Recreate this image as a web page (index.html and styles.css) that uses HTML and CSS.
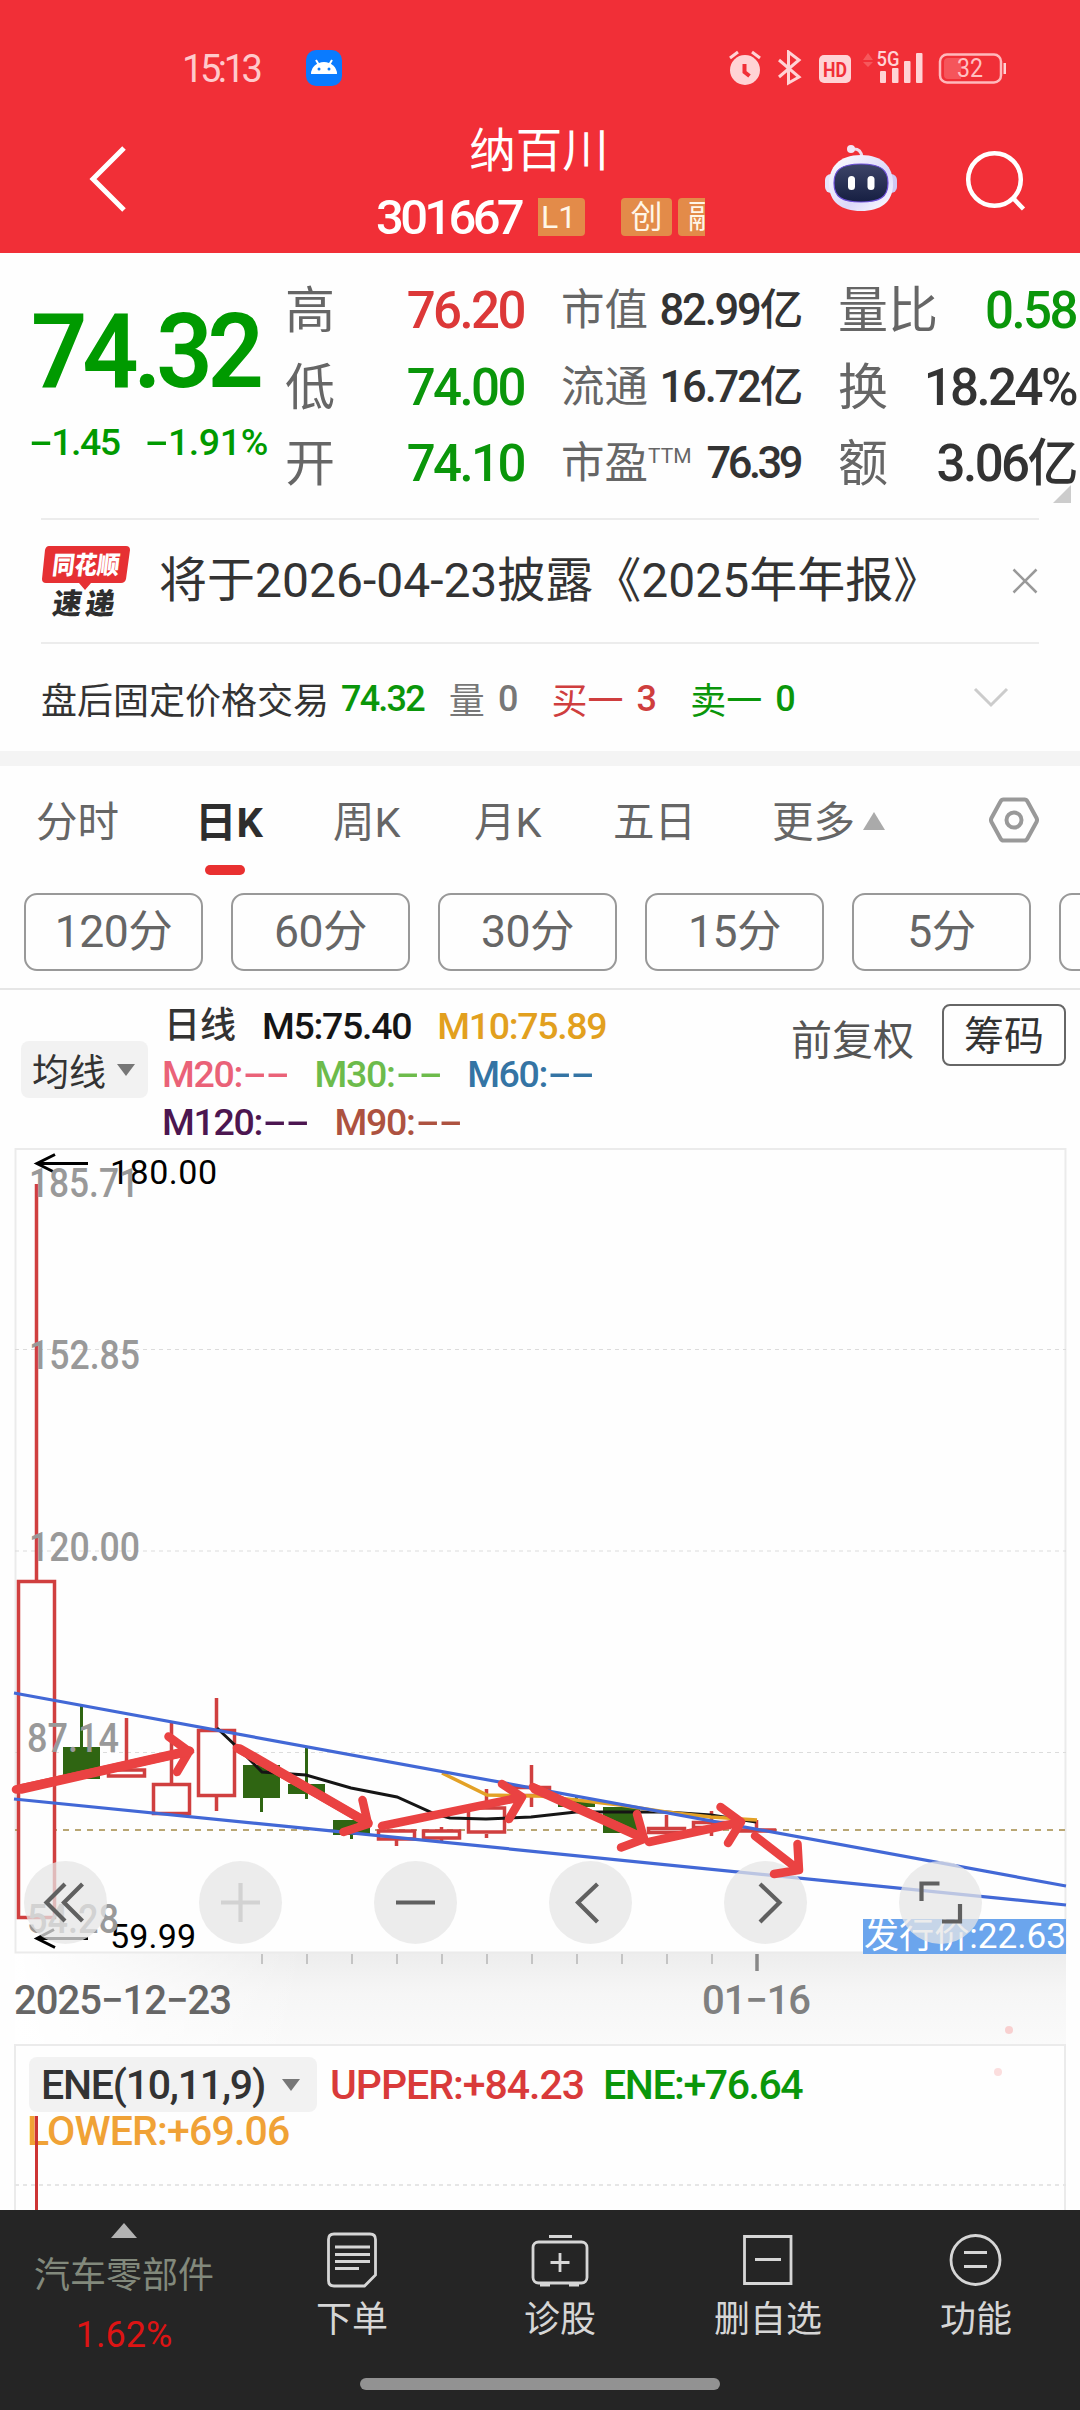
FILE: index.html
```html
<!DOCTYPE html>
<html lang="zh-CN">
<head>
    <meta charset="UTF-8">
    <title>纳百川 301667</title>
    <link rel="stylesheet" href="styles.css">
</head>
<body>
    <header class="header">
        <div class="status">
            <span class="clock num">15:13</span>
            <svg class="android" width="36" height="36" viewBox="0 0 36 36">
                <rect width="36" height="36" rx="10" fill="#0a7bff"/>
                <path d="M5 24a13 12 0 0 1 26 0z" fill="#fff"/>
                <path d="M10 10l3 5M26 10l-3 5" stroke="#fff" stroke-width="2"/>
                <circle cx="13" cy="19" r="1.5" fill="#0a7bff"/>
                <circle cx="23" cy="19" r="1.5" fill="#0a7bff"/>
            </svg>
            <svg class="status-icons" width="280" height="36" viewBox="728 50 280 36">
                <g fill="#ffd3d5">
                    <circle cx="745" cy="70" r="15"/>
                    <rect x="819" y="55" width="32" height="28" rx="5"/>
                    <rect x="880" y="71" width="6" height="12" rx="1"/>
                    <rect x="892" y="68" width="6.500" height="15" rx="1"/>
                    <rect x="904" y="61" width="6.500" height="22" rx="1"/>
                    <rect x="916" y="53" width="6.500" height="30" rx="1"/>
                    <rect x="1003.500" y="63" width="2.500" height="11"/>
                </g>
                <path d="M730 58l8-6M752 52l8 6" stroke="#ffd3d5" stroke-width="3"/>
                <path d="M744.500 64v8l5 4" fill="none" stroke="#f12f37" stroke-width="4"/>
                <path d="M779 60l20 17-10.500 6V52l10.500 8-20 17" fill="none" stroke="#ffd3d5" stroke-width="3"/>
                <path d="M863 60l5-7 5 7zM863 62l5 5 5-5z" fill="#f6585c"/>
                <rect x="940" y="54.500" width="61" height="28" rx="7" fill="none" stroke="#ffb9bc" stroke-width="2.500"/>
                <path d="M948 58h13v21h-13q-4 0-4-4V62q0-4 4-4z" fill="#f5555b"/>
                <text x="823" y="76.500" font-size="21" font-weight="700" textLength="24" lengthAdjust="spacingAndGlyphs" fill="#f12f37">HD</text>
                <text x="876.500" y="66" font-size="20" font-weight="500" textLength="23" lengthAdjust="spacingAndGlyphs" fill="#ffd3d5">5G</text>
                <text x="957" y="77" font-size="25" textLength="26" lengthAdjust="spacingAndGlyphs" fill="#ffc0c2">32</text>
            </svg>
        </div>
        <div class="titlebar">
            <svg class="back" width="40" height="70" viewBox="0 0 40 70">
                <path d="M36 4L5 35l31 31" fill="none" stroke="#fff" stroke-width="5"/>
            </svg>
            <div class="title">
                <h1>纳百川</h1>
                <div class="code-row">
                    <span class="code num">301667</span>
                    <span class="badge l1">L1</span>
                    <span class="badge gem">创</span>
                    <span class="badge margin">融</span>
                </div>
            </div>
            <svg class="robot" width="76" height="70" viewBox="824 143 76 70">
                <defs>
                    <linearGradient id="shell" x1="0" y1="0" x2="1" y2="1">
                        <stop offset="0" stop-color="#fff"/>
                        <stop offset=".6" stop-color="#dcd8fa"/>
                        <stop offset="1" stop-color="#fff"/>
                    </linearGradient>
                    <linearGradient id="visor" x1="0" y1="0" x2="0" y2="1">
                        <stop offset="0" stop-color="#3d4468"/>
                        <stop offset="1" stop-color="#161f42"/>
                    </linearGradient>
                </defs>
                <path d="M852 149q9-1 10 8" fill="none" stroke="#f0dcec" stroke-width="3"/>
                <circle cx="851" cy="149" r="4" fill="#f3e6f5"/>
                <rect x="825" y="174" width="12" height="19" rx="6" fill="#e8e4fa"/>
                <rect x="885" y="174" width="12" height="19" rx="6" fill="#cfc8f2"/>
                <path d="M861 155c22 0 32 12 32 29 0 18-12 27-32 27s-32-9-32-27c0-17 10-29 32-29z" fill="url(#shell)"/>
                <path d="M861 164c20 0 27 6 27 19 0 14-8 19-27 19s-27-5-27-19c0-13 7-19 27-19z" fill="url(#visor)" stroke="#6d4fd8" stroke-width="1.200"/>
                <rect x="848" y="176" width="7" height="14" rx="3.500" fill="#fff"/>
                <rect x="867.500" y="176" width="7" height="14" rx="3.500" fill="#fff"/>
            </svg>
            <svg class="search" width="62" height="62" viewBox="965 150 62 62">
                <circle cx="994.500" cy="179.500" r="26.300" fill="none" stroke="#fff" stroke-width="4.500"/>
                <path d="M1012 197l11.500 12" stroke="#fff" stroke-width="4.500"/>
            </svg>
        </div>
    </header>

    <section class="quote">
        <div class="price-box">
            <div class="price num">74.32</div>
            <div class="change num"><span><i class="dash">-</i>1.45</span><span class="pct"><i class="dash">-</i>1.91%</span></div>
        </div>
        <div class="stats">
            <div class="cell"><span class="lab">高</span><b class="num red">76.20</b></div>
            <div class="cell small"><span class="lab">市值</span><b class="num">82.99亿</b></div>
            <div class="cell"><span class="lab">量比</span><b class="num green">0.58</b></div>
            <div class="cell"><span class="lab">低</span><b class="num green">74.00</b></div>
            <div class="cell small"><span class="lab">流通</span><b class="num">16.72亿</b></div>
            <div class="cell"><span class="lab">换</span><b class="num">18.24%</b></div>
            <div class="cell"><span class="lab">开</span><b class="num green">74.10</b></div>
            <div class="cell small"><span class="lab">市盈<sup>TTM</sup></span><b class="num pe">76.39</b></div>
            <div class="cell"><span class="lab">额</span><b class="num">3.06亿</b></div>
        </div>
        <div class="corner"></div>
    </section>

    <section class="notice">
        <svg width="90" height="74" viewBox="41 543 90 74">
            <path d="M49 544h77q4 0 4 4l-4 29q-1 4-5 4h-30l-6 7-6-7H46q-4 0-4-4l3-29q1-4 4-4z" fill="#e63033"/>
            <text x="0" y="0" transform="translate(51.500 572) skewX(-7)" font-size="25" font-weight="900" textLength="67" lengthAdjust="spacingAndGlyphs" fill="#fff">同花顺</text>
            <text x="0" y="0" transform="translate(51.500 612) skewX(-8)" font-size="29" font-weight="900" textLength="62" fill="#2e2e2e">速递</text>
        </svg>
        <p>将于2026-04-23披露《2025年年报》</p>
        <svg class="close" width="26" height="26" viewBox="0 0 26 26">
            <path d="M1.500 1.500l23 23M24.500 1.500l-23 23" stroke="#999" stroke-width="2.500"/>
        </svg>
    </section>

    <section class="after-hours">
        <span class="ah-title">盘后固定价格交易</span>
        <b class="num green">74.32</b>
        <span class="ah-vol">量</span><b class="num gray">0</b>
        <span class="ah-buy red2">买一</span><b class="num red2">3</b>
        <span class="ah-sell green">卖一</span><b class="num green">0</b>
        <svg class="more" width="36" height="22" viewBox="0 0 36 22">
            <path d="M2 2l16 16L34 2" fill="none" stroke="#ccc" stroke-width="3"/>
        </svg>
    </section>

    <nav class="tabs">
        <span class="t1">分时</span>
        <span class="t2 active">日K</span>
        <span class="t3">周K</span>
        <span class="t4">月K</span>
        <span class="t5">五日</span>
        <span class="t6">更多<i class="tri-up"></i></span>
        <svg class="gear" width="50" height="46" viewBox="0 0 50 46">
            <path d="M14.500 2.500h21q2 0 3 2l9 16.500q1 2 0 4l-9 16.500q-1 2-3 2h-21q-2 0-3-2l-9-16.500q-1-2 0-4l9-16.500q1-2 3-2z" fill="none" stroke="#999" stroke-width="4"/>
            <circle cx="25" cy="23" r="7.500" fill="none" stroke="#999" stroke-width="4"/>
        </svg>
    </nav>
    <div class="periods">
        <button>120分</button>
        <button>60分</button>
        <button>30分</button>
        <button>15分</button>
        <button>5分</button>
        <button></button>
    </div>

    <section class="ma">
        <span class="picker">均线<i class="tri-down"></i></span>
        <div class="ma-rows num">
            <div><span class="ma-name">日线</span><span class="c-black">M5:75.40</span><span class="c-orange">M10:75.89</span></div>
            <div><span class="c-pink">M20:<i class="dash">-</i><i class="dash">-</i></span><span class="c-green">M30:<i class="dash">-</i><i class="dash">-</i></span><span class="c-blue">M60:<i class="dash">-</i><i class="dash">-</i></span></div>
            <div><span class="c-purple">M120:<i class="dash">-</i><i class="dash">-</i></span><span class="c-brown">M90:<i class="dash">-</i><i class="dash">-</i></span></div>
        </div>
        <span class="adjust">前复权</span>
        <span class="chips">筹码</span>
    </section>

    <!-- K线主图 -->
    <svg class="kline" width="1080" height="896" viewBox="0 1148 1080 896">
        <defs>
            <linearGradient id="axisV" x1="0" y1="0" x2="0" y2="1">
                <stop offset="0" stop-color="#ededed"/>
                <stop offset=".45" stop-color="#f6f6f6"/>
                <stop offset="1" stop-color="#fafafa"/>
            </linearGradient>
            <linearGradient id="axisH" x1="0" y1="0" x2="1" y2="0">
                <stop offset="0" stop-color="#fff"/>
                <stop offset="1" stop-color="#fff" stop-opacity="0"/>
            </linearGradient>
        </defs>
        <rect x="15" y="1953" width="1051" height="91" fill="url(#axisV)"/>
        <rect x="15" y="1953" width="290" height="91" fill="url(#axisH)"/>
        <rect x="15.500" y="1149" width="1050" height="803.500" fill="#fefefe" stroke="#ebebeb" stroke-width="2"/>
        <g stroke="#dcdcdc" stroke-width="1.200" stroke-dasharray="4 4">
            <path d="M15 1349.500h1051M15 1551h1051M15 1752.500h1051"/>
        </g>
        <path d="M15 1830h1051" stroke="#b9a673" stroke-width="2" stroke-dasharray="6 6"/>

        <g stroke="#c4c4c4" stroke-width="2">
            <path d="M262 1954v10M307 1954v10M352 1954v10M397 1954v10M442 1954v10M487 1954v10M532 1954v10M577 1954v10M622 1954v10M667 1954v10M712 1954v10"/>
            <path d="M757 1954v17" stroke="#888" stroke-width="3.500"/>
        </g>

        <g fill="#fefefe" stroke="#d03f3f" stroke-width="3.500">
            <path d="M36.500 1184v396"/>
            <rect x="18.500" y="1581.500" width="36" height="336"/>
            <path d="M126.500 1718v51M171.500 1723v60M216.500 1698v31M216.500 1797v14M396.500 1840v6M441.500 1827v14M486.500 1789v19M486.500 1834v4M531.500 1765v42M666.500 1815v12M711.500 1811v25M756.500 1820v9"/>
            <rect x="108.500" y="1770" width="36" height="6"/>
            <rect x="153.500" y="1784.500" width="36" height="29"/>
            <rect x="198.500" y="1730.500" width="36" height="65"/>
            <rect x="378.500" y="1831" width="36" height="8"/>
            <rect x="423.500" y="1831" width="36" height="7"/>
            <rect x="468.500" y="1808" width="36" height="24"/>
            <rect x="513.500" y="1787.500" width="36" height="8"/>
            <rect x="648.500" y="1828.500" width="36" height="4"/>
            <rect x="693.500" y="1822.500" width="36" height="5"/>
            <rect x="738.500" y="1830" width="36" height="1"/>
        </g>
        <g fill="#2f6512" stroke="#2f6512" stroke-width="3">
            <path d="M81.500 1706v41M261.500 1798v14M306.500 1748v51M351.500 1835v4M576.500 1797v6"/>
            <g stroke="none">
                <rect x="63" y="1747" width="37" height="32"/>
                <rect x="243" y="1765" width="37" height="33"/>
                <rect x="288" y="1784" width="37" height="10"/>
                <rect x="333" y="1820" width="37" height="15"/>
                <rect x="558" y="1801" width="37" height="6"/>
                <rect x="603" y="1807" width="37" height="26"/>
            </g>
        </g>

        <g fill="none" stroke-width="3">
            <path d="M217 1728l20 19 25 25 44 3 45 13 46 9 38 17 15 4 36 1 45-2 45-5h90l45 3 45 7" stroke="#151515"/>
            <path d="M442 1773l45 22 53 1 36 4 44 5 46 7 45 5 46 3" stroke="#e3a126" stroke-width="3.500"/>
            <path d="M14 1693l1052 193M14 1799l1052 106" stroke="#4268d6" stroke-width="3.200"/>
        </g>

        <text class="edge" x="110" y="1184" textLength="107">180.00</text>
        <text class="edge" x="110" y="1948" textLength="86">59.99</text>
        <path d="M88 1163.500H38M55 1154.500l-18 9 16 8M88 1938.500H38M54 1929.500l-17 9 18 9" fill="none" stroke="#000" stroke-width="3"/>
        <g class="scale">
            <text x="29" y="1197" textLength="110" lengthAdjust="spacingAndGlyphs">185.71</text>
            <text x="29" y="1369" textLength="111" lengthAdjust="spacingAndGlyphs">152.85</text>
            <text x="29" y="1561" textLength="111" lengthAdjust="spacingAndGlyphs">120.00</text>
            <text x="27" y="1752" textLength="92" lengthAdjust="spacingAndGlyphs">87.14</text>
            <text x="27" y="1933" textLength="92" lengthAdjust="spacingAndGlyphs">54.28</text>
        </g>
        <rect x="863" y="1919" width="203" height="35" fill="#6ba5ed"/>
        <text x="864" y="1948" font-size="35" textLength="202" lengthAdjust="spacingAndGlyphs" fill="#fff">发行价:22.63</text>

        <g fill="#e6e6e6" fill-opacity=".74">
            <circle cx="65.500" cy="1902.500" r="41.500"/>
            <circle cx="240.500" cy="1902.500" r="41.500"/>
            <circle cx="415.500" cy="1902.500" r="41.500"/>
            <circle cx="590.500" cy="1902.500" r="41.500"/>
            <circle cx="765.500" cy="1902.500" r="41.500"/>
            <circle cx="940.500" cy="1902.500" r="41.500"/>
        </g>
        <g fill="none" stroke="#606060" stroke-width="4.200">
            <path d="M65 1884l-18.500 18.500L65 1921M82.500 1884L64 1902.500l18.500 18.500"/>
            <path d="M221 1902.500h39M240.500 1883v39" stroke="#d2d2d2"/>
            <path d="M396 1902.500h39"/>
            <path d="M597.500 1884L578 1902.500l19.500 19.500"/>
            <path d="M760 1884l19.500 18.500-19.500 19.500"/>
            <path d="M921.500 1901v-17.500h18M942 1921.500h18V1904"/>
        </g>
        <!-- 手绘趋势箭头 -->
        <g fill="none" stroke="#ea4242" stroke-width="8.500" stroke-linecap="round" stroke-linejoin="round">
            <path d="M16 1789.500l174-38.500M168.500 1736.500l20.500 15-12 20.500"/>
            <path d="M237 1748l131 75M362.500 1800l5.500 24-24.500 8"/>
            <path d="M382 1826l140-29M502 1784l20 13-13 22"/>
            <path d="M533 1787l110 51M637 1814l7 25-23 8.500"/>
            <path d="M649 1842l92-20M720.500 1807l20.500 15-13 21"/>
            <path d="M755 1836l44 34M797.500 1844l1.500 26-25 4"/>
            <path d="M21 1789l168-38M240 1749l128 74M535 1789l108 49" stroke-width="9.500"/>
        </g>

        <text class="date" x="14" y="2014" textLength="218" fill="#666">2025−12−23</text>
        <text class="date" x="702" y="2014" textLength="109" fill="#808080">01−16</text>
        <circle cx="1009" cy="2030" r="4" fill="#f8d0d0"/>
    </svg>

    <section class="indicator">
        <div class="ene num">
            <span class="picker">ENE(10,11,9)<i class="tri-down"></i></span>
            <span class="upper">UPPER:+84.23</span>
            <span class="mid">ENE:+76.64</span>
        </div>
        <div class="lower num">LOWER:+69.06</div>
        <svg class="ene-lines" width="1051" height="166" viewBox="15 2044 1051 166">
            <path d="M15 2185h1051" stroke="#e6e6e6" stroke-width="2" stroke-dasharray="4 4"/>
            <path d="M36.500 2116v94" stroke="#cd3434" stroke-width="3"/>
            <circle cx="998" cy="2072" r="4" fill="#fbdede"/>
        </svg>
    </section>

    <footer class="bottom">
        <div class="sector">
            <i class="tri-up"></i>
            <span>汽车零部件</span>
            <b>1.62%</b>
        </div>
        <div class="item">
            <svg width="60" height="60" viewBox="0 0 60 60">
                <path d="M12 5q-5.500 0-5.500 5.500v41q0 5.500 5.500 5.500h30.500l11-11V10.500q0-5.500-5.500-5.500z"/>
                <path d="M13 18h35M13 25.500h35M13 32.500h35M13 39.500h24"/>
            </svg>
            下单
        </div>
        <div class="item">
            <svg width="60" height="60" viewBox="0 0 60 60">
                <rect x="3" y="13" width="54" height="41" rx="5.500"/>
                <path d="M19 7.500h23M20.500 33.500h19M30 24v19M10 56h10M39 56h10"/>
            </svg>
            诊股
        </div>
        <div class="item">
            <svg width="60" height="60" viewBox="0 0 60 60">
                <path d="M6.500 7.500h46.500v47H6.500zM17 30.500h26"/>
            </svg>
            删自选
        </div>
        <div class="item">
            <svg width="60" height="60" viewBox="0 0 60 60">
                <circle cx="29.500" cy="31" r="24.500"/>
                <path d="M18 23.500h23M18 37.500h23"/>
            </svg>
            功能
        </div>
        <div class="home-bar"></div>
    </footer>
</body>
</html>
```
FILE: styles.css
```css
* {
    box-sizing: border-box;
}
body {
    margin: 0;
    width: 1080px;
    height: 2410px;
    overflow: hidden;
    background: #fefefe;
    color: #333;
    font-family: Roboto, "Noto Sans CJK SC", sans-serif;
}
svg {
    display: block;
    flex: none;
}
i {
    font-style: normal;
}
.num {
    font-weight: 500;
    letter-spacing: -0.05em;
}
.dash {
    display: inline-block;
    width: 0.62em;
    text-align: center;
    transform: scaleX(1.9);
}
.red { color: #dc3838; }
.red2 { color: #cf3e3e; }
.green { color: #0a960a; }
.gray { color: #777; }
.tri-up, .tri-down {
    display: inline-block;
    border: 11px solid transparent;
    border-top-width: 0;
    border-bottom: 18px solid #aaa;
}
.tri-down {
    border: 9px solid transparent;
    border-bottom-width: 0;
    border-top: 12px solid #777;
}

/* 顶部 */
.header {
    height: 253px;
    background: #f12f37;
    color: #fff;
}
.status {
    display: flex;
    padding: 50px 72px 0 182px;
    height: 122px;
}
.clock {
    width: 124px;
    font-size: 38px;
    font-weight: 400;
    line-height: 38px;
    letter-spacing: -0.09em;
    color: #ffc9cb;
}
.status-icons {
    margin-left: auto;
}
.titlebar {
    display: flex;
}
.back {
    margin: 22px 0 0 88px;
}
.title {
    width: 330px;
    margin-left: 248px;
}
h1 {
    margin: 0;
    padding-right: 4px;
    font-size: 46.5px;
    font-weight: 400;
    line-height: 59px;
    text-align: center;
}
.code-row {
    display: flex;
    align-items: center;
    height: 72px;
}
.code {
    width: 162px;
    font-size: 49px;
    letter-spacing: -0.075em;
}
.badge {
    height: 38px;
    border-radius: 4px;
    background: #e38b49;
    color: #fff6e8;
    font-size: 32px;
    line-height: 38px;
    text-align: center;
    overflow: hidden;
}
.badge.l1 {
    width: 47px;
    text-align: left;
    padding-left: 3px;
    border-radius: 0 4px 4px 0;
}
.badge.gem {
    width: 51px;
    margin-left: 36px;
}
.badge.margin {
    width: 27px;
    margin-left: 6px;
    padding-left: 10px;
    border-radius: 4px 0 0 4px;
    text-align: left;
}
.robot {
    margin: 21px 0 0 118px;
}
.search {
    margin: 28px 0 0 65px;
}

/* 行情 */
.quote {
    display: flex;
    position: relative;
    height: 265px;
    padding: 20px 2px 0 31px;
}
.price-box {
    width: 254px;
    color: #009a00;
}
.price {
    margin-top: 17px;
    font-size: 103px;
    line-height: 123px;
    letter-spacing: -0.053em;
    font-weight: 600;
    transform: scaleX(0.96);
    transform-origin: 0 0;
}
.change {
    display: flex;
    justify-content: space-between;
    width: 237px;
    margin-top: 8px;
    font-size: 37.5px;
    line-height: 42px;
    letter-spacing: -0.04em;
    white-space: nowrap;
}
.change .dash {
    margin-left: -3px;
}
.change .pct {
    letter-spacing: -0.01em;
}
.stats {
    display: grid;
    grid-template-columns: 239px 240px 238px;
    grid-auto-rows: 76.5px;
    column-gap: 37px;
    width: 791px;
    color: #333;
}
.cell {
    display: flex;
    justify-content: space-between;
    align-items: center;
    font-size: 50px;
    line-height: 76px;
    white-space: nowrap;
}
.cell b {
    font-size: 51px;
}
.cell .lab {
    color: #666;
}
.cell.small {
    font-size: 43.5px;
}
.cell.small b {
    font-size: 43.5px;
}
.cell.small .pe {
    letter-spacing: -0.08em;
    padding-right: 1px;
}
sup {
    font-size: 21px;
    line-height: 0;
    vertical-align: 15px;
}
.corner {
    position: absolute;
    right: 9px;
    bottom: 15px;
    border-left: 18px solid transparent;
    border-bottom: 18px solid #ccc;
}

/* 公告 */
.notice {
    display: flex;
    height: 124px;
    margin: 0 41px;
    padding-top: 25px;
    border-top: 2px solid #ececec;
}
.notice p {
    flex: 1;
    margin: 2px 0 0 28px;
    font-size: 48px;
    line-height: 68px;
    white-space: nowrap;
}
.close {
    margin: 23px 1px 0 0;
}
.after-hours {
    display: flex;
    align-items: center;
    height: 109px;
    margin: 0 41px;
    padding-top: 1px;
    border-top: 2px solid #ececec;
    font-size: 36px;
}
.after-hours b {
    padding-top: 1px;
    font-size: 36px;
}
.ah-title {
    width: 300px;
    font-size: 36px;
}
.ah-vol {
    margin: 0 13px 0 25px;
    color: #777;
}
.ah-buy {
    margin: 0 13px 0 35px;
}
.ah-sell {
    margin: 0 13px 0 35px;
}
.more {
    margin: 0 30px 0 auto;
}

/* 周期 */
.tabs {
    display: flex;
    height: 142px;
    padding: 27px 41px 0 36px;
    border-top: 15px solid #f4f4f4;
    font-size: 41.5px;
    line-height: 60px;
    color: #666;
}
.t1 { width: 159px; }
.t2 { width: 138px; }
.t3 { width: 141px; }
.t4 { width: 139px; }
.t5 { width: 159px; }
.t6 { width: 217px; white-space: nowrap; }
.t6 .tri-up {
    margin-left: 8px;
    vertical-align: 7px;
}
.active {
    position: relative;
    font-weight: 700;
    color: #2e2e2e;
}
.active::after {
    content: "";
    position: absolute;
    left: 10px;
    top: 72px;
    width: 40px;
    height: 10px;
    border-radius: 5px;
    background: #e93030;
}
.gear {
    margin-top: 4px;
}
.periods {
    display: flex;
    gap: 28px;
    height: 97px;
    padding-left: 24px;
    overflow: hidden;
    border-bottom: 2px solid #e6e6e6;
}
.periods button {
    flex: none;
    width: 179px;
    height: 78px;
    padding: 0;
    border: 2px solid #999;
    border-radius: 13px;
    background: none;
    color: #666;
    font: 44.5px/74px Roboto, "Noto Sans CJK SC", sans-serif;
    letter-spacing: -0.01em;
}

/* 均线 */
.ma {
    display: flex;
    height: 158px;
    padding: 12px 14px 0 21px;
}
.picker {
    display: flex;
    align-items: center;
    border-radius: 8px;
    background: #f2f2f2;
    color: #333;
}
.ma .picker {
    width: 127px;
    height: 57px;
    margin-top: 39px;
    padding-left: 11px;
    font-size: 37px;
}
.ma .tri-down {
    margin-left: 11px;
}
.ma-rows {
    width: 627px;
    margin-left: 14px;
    font-size: 37.5px;
    line-height: 48px;
    letter-spacing: -0.035em;
}
.ma-rows > div {
    display: flex;
    gap: 26px;
}
.ma-name {
    letter-spacing: 0;
    font-size: 36px;
    margin-left: 2px;
}
.c-black { color: #151515; }
.c-orange { color: #e2a01e; }
.c-pink { color: #ea6278; }
.c-green { color: #6dbb4b; }
.c-blue { color: #3474a4; }
.c-purple { color: #4c1650; }
.c-brown { color: #ad5240; }
.adjust {
    width: 151px;
    margin: 11px 0 0 2px;
    font-size: 41px;
    line-height: 56px;
    color: #555;
}
.chips {
    width: 124px;
    height: 62px;
    margin-top: 2px;
    border: 2px solid #666;
    border-radius: 8px;
    font-size: 40px;
    line-height: 62px;
    text-align: center;
}

/* 图表 */
.kline .edge {
    font-size: 34px;
    fill: #000;
}
.kline .scale text {
    font-size: 40px;
    font-weight: 500;
    fill: #999;
}
.kline .date {
    font-size: 40px;
    font-weight: 500;
}
.indicator {
    position: relative;
    height: 166px;
    margin: 0 14px 0 14px;
    padding: 11px 0 0 13px;
    border: 2px solid #ebebeb;
    border-bottom: none;
}
.ene {
    display: flex;
    align-items: center;
    height: 55px;
    font-size: 41px;
    letter-spacing: -0.025em;
}
.ene .picker {
    width: 288px;
    height: 55px;
    padding-left: 12px;
    white-space: nowrap;
    letter-spacing: -0.03em;
}
.ene .tri-down {
    margin-left: auto;
    margin-right: 17px;
}
.upper {
    margin-left: 13px;
    width: 273px;
    color: #d93a3a;
}
.mid {
    letter-spacing: -0.035em;
    color: #0a960a;
}
.lower {
    margin-left: -2px;
    font-size: 41px;
    line-height: 39px;
    letter-spacing: -0.02em;
    color: #f0a236;
}
.ene-lines {
    position: absolute;
    left: -1px;
    top: -2px;
}

/* 底部导航 */
.bottom {
    display: flex;
    position: relative;
    height: 200px;
    background: #252525;
    color: #d6d6d6;
}
.sector {
    display: flex;
    flex-direction: column;
    align-items: center;
    width: 248px;
    padding-top: 13px;
    font-size: 36px;
    color: #82897c;
}
.sector .tri-up {
    border-width: 0 13px 15px;
    border-bottom-color: #b3b3b3;
}
.sector span {
    margin-top: 12px;
    line-height: 52px;
}
.sector b {
    margin-top: 9px;
    font-weight: 400;
    line-height: 48px;
    color: #dd1414;
}
.item {
    display: flex;
    flex-direction: column;
    align-items: center;
    width: 208px;
    padding-top: 19px;
    font-size: 36px;
    line-height: 62px;
}
.item svg {
    fill: none;
    stroke: #d6d6d6;
    stroke-width: 2.8;
}
.home-bar {
    position: absolute;
    left: 360px;
    bottom: 20px;
    width: 360px;
    height: 12px;
    border-radius: 6px;
    background: #929292;
}
```
